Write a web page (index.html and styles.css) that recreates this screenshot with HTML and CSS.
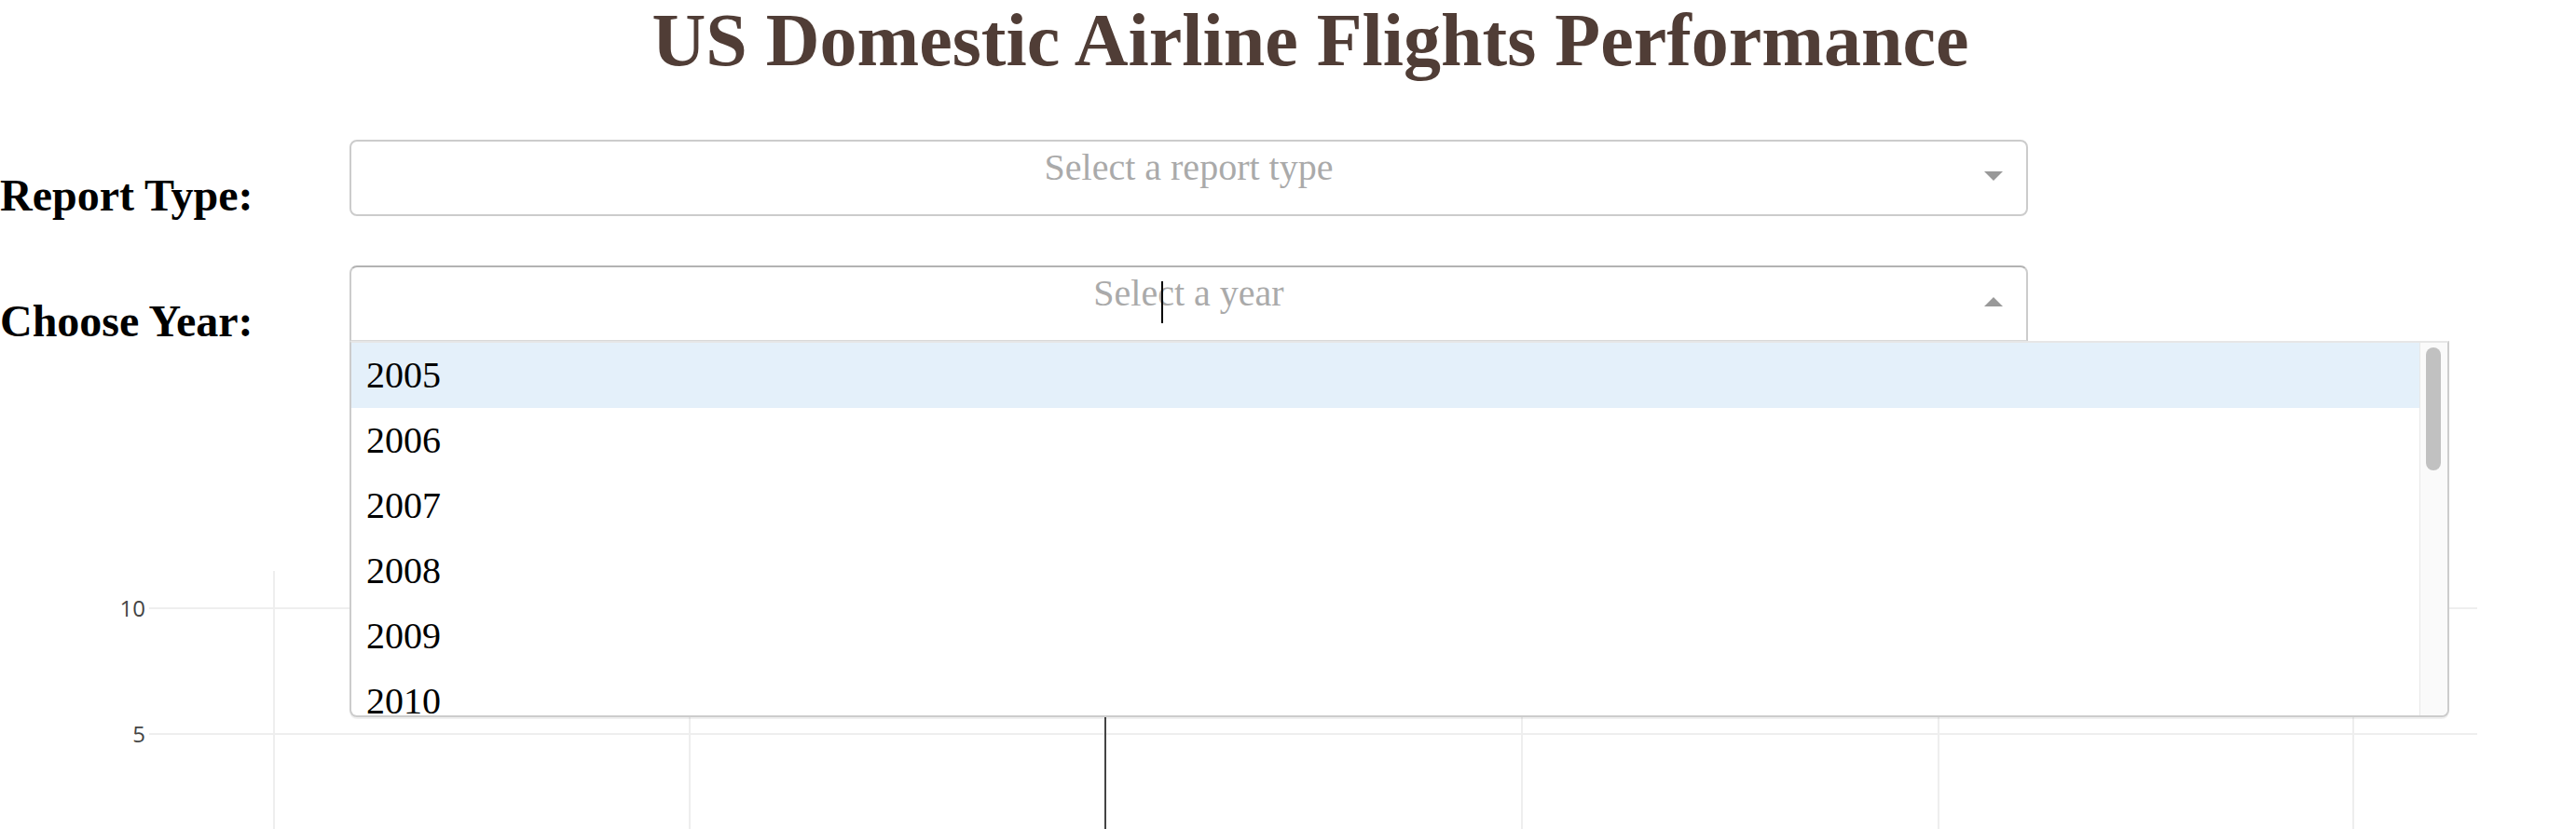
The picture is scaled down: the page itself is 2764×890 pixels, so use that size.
FILE: index.html
```html
<!DOCTYPE html>
<html lang="en">
<head>
<meta charset="utf-8">
<title>US Domestic Airline Flights Performance</title>
<link rel="stylesheet" href="styles.css">
</head>
<body>
<div class="page">
  <h1 class="title">US Domestic Airline Flights Performance</h1>

  <div class="row row-report">
    <h2 class="label">Report Type:</h2>
    <div class="select">
      <div class="control">
        <span class="placeholder">Select a report type</span>
        <span class="arrow-zone"><span class="arrow arrow-down"></span></span>
      </div>
    </div>
  </div>

  <div class="row row-year">
    <h2 class="label">Choose Year:</h2>
    <div class="select is-open">
      <div class="control">
        <span class="placeholder">Select a year</span>
        <span class="caret"></span>
        <span class="arrow-zone"><span class="arrow arrow-up"></span></span>
      </div>
      <div class="menu-outer">
        <div class="menu">
          <div class="options">
            <div class="option is-focused">2005</div>
            <div class="option">2006</div>
            <div class="option">2007</div>
            <div class="option">2008</div>
            <div class="option">2009</div>
            <div class="option">2010</div>
          </div>
          <div class="scrollbar"><div class="thumb"></div></div>
        </div>
      </div>
    </div>
  </div>

  <div class="graph">
    <svg class="plot" width="2764" height="300" viewBox="0 0 2764 300">
      <g class="grid">
        <line x1="294" y1="23" x2="294" y2="300"></line>
        <line x1="740" y1="23" x2="740" y2="300"></line>
        <line x1="1633" y1="23" x2="1633" y2="300"></line>
        <line x1="2080" y1="23" x2="2080" y2="300"></line>
        <line x1="2525" y1="23" x2="2525" y2="300"></line>
        <line x1="160" y1="63" x2="2658" y2="63"></line>
        <line x1="160" y1="198" x2="2658" y2="198"></line>
      </g>
      <line class="zero" x1="1186" y1="23" x2="1186" y2="300"></line>
      <g class="ticks">
        <text x="156" y="72">10</text>
        <text x="156" y="207">5</text>
      </g>
    </svg>
  </div>
</div>
</body>
</html>
```

FILE: styles.css
```css
html, body {
  margin: 0;
  padding: 0;
  background: #fff;
}

body {
  font-family: "Liberation Serif", "Times New Roman", serif;
  color: #000;
  overflow: hidden;
}

.page {
  width: 2764px;
}

.title {
  margin: -1px 0 0;
  padding-left: 48px;
  text-align: center;
  color: #503D36;
  font-size: 80px;
  line-height: 88px;
  font-weight: bold;
}

.row {
  display: flex;
  align-items: flex-start;
  height: 82px;
}

.row-report {
  margin-top: 63px;
}

.row-year {
  margin-top: 53px;
}

.label {
  flex: none;
  width: 375px;
  margin: 36px 0 0;
  font-size: 48px;
  line-height: 48px;
  font-weight: bold;
  white-space: nowrap;
}

.select {
  position: relative;
  flex: none;
  width: 1801px;
}

.control {
  position: relative;
  box-sizing: border-box;
  height: 82px;
  border: 2px solid #ccc;
  border-radius: 8px;
  background: #fff;
}

.is-open .control {
  border-color: #b3b3b3 #ccc #d9d9d9;
  border-bottom-left-radius: 0;
  border-bottom-right-radius: 0;
}

.placeholder {
  display: block;
  padding-top: 4px;
  text-align: center;
  font-size: 40px;
  line-height: 48px;
  color: #aaa;
  white-space: nowrap;
}

.caret {
  position: absolute;
  left: 869px;
  top: 15px;
  width: 2px;
  height: 45px;
  background: #000;
}

.arrow-zone {
  position: absolute;
  top: 0;
  bottom: 0;
  right: 10px;
  width: 50px;
  display: flex;
  align-items: center;
  justify-content: center;
}

.arrow {
  display: block;
  width: 0;
  height: 0;
  border-style: solid;
}

.arrow-down {
  border-width: 10px 10px 5px;
  border-color: #999 transparent transparent;
}

.arrow-up {
  position: relative;
  top: -2px;
  border-width: 0 10px 10px;
  border-color: transparent transparent #999;
}

.menu-outer {
  position: absolute;
  z-index: 10;
  top: 81px;
  left: 0;
  box-sizing: border-box;
  width: 2253px;
  border: 2px solid #ccc;
  border-top-color: #e6e6e6;
  border-radius: 0 0 8px 8px;
  background: #fff;
  box-shadow: 0 2px 0 rgba(0, 0, 0, 0.06);
  overflow: hidden;
}

.menu {
  display: flex;
  height: 400px;
}

.options {
  flex: 1;
  overflow: hidden;
}

.option {
  height: 70px;
  padding-left: 16px;
  font-size: 40px;
  line-height: 70px;
  color: #000;
}

.option.is-focused {
  background: #e4f0fa;
}

.scrollbar {
  position: relative;
  flex: none;
  width: 29px;
  border-left: 1px solid #e8e8e8;
  background: #fafafa;
}

.thumb {
  position: absolute;
  left: 6px;
  top: 5px;
  width: 16px;
  height: 132px;
  border-radius: 8px;
  background: #c1c1c1;
}

.graph {
  margin-top: 223px;
}

.plot {
  display: block;
}

.grid line {
  stroke: #eee;
  stroke-width: 2;
}

.zero {
  stroke: #444;
  stroke-width: 2;
}

.ticks text {
  font-family: "Open Sans", "Liberation Sans", sans-serif;
  font-size: 24px;
  fill: #444;
  text-anchor: end;
}
```
